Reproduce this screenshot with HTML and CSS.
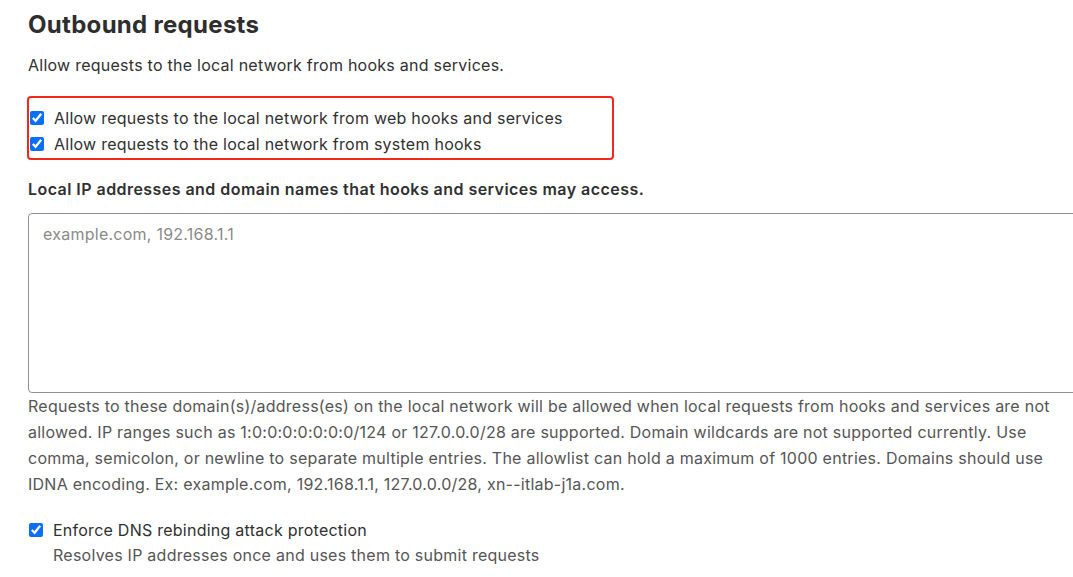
FILE: index.html
```html
<!DOCTYPE html>
<html lang="en">
<head>
  <meta charset="UTF-8">
  <title>Outbound requests</title>
  <link rel="stylesheet" href="styles.css">
</head>
<body>
  <section class="settings">
    <h2 class="settings-title">Outbound requests</h2>
    <p class="settings-desc">Allow requests to the local network from hooks and services.</p>

    <!-- Highlighted group of local network toggles -->
    <div class="highlight">
      <label class="check">
        <input type="checkbox" checked>
        <span>Allow requests to the local network from web hooks and services</span>
      </label>
      <label class="check">
        <input type="checkbox" checked>
        <span>Allow requests to the local network from system hooks</span>
      </label>
    </div>

    <label class="field-label" for="allowlist">Local IP addresses and domain names that hooks and services may access.</label>
    <textarea id="allowlist" class="field-input" placeholder="example.com, 192.168.1.1"></textarea>
    <p class="field-help">Requests to these domain(s)/address(es) on the local network will be allowed when local requests from hooks and services are not allowed. IP ranges such as 1:0:0:0:0:0:0:0/124 or 127.0.0.0/28 are supported. Domain wildcards are not supported currently. Use comma, semicolon, or newline to separate multiple entries. The allowlist can hold a maximum of 1000 entries. Domains should use IDNA encoding. Ex: example.com, 192.168.1.1, 127.0.0.0/28, xn--itlab-j1a.com.</p>

    <label class="check check-dns">
      <input type="checkbox" checked>
      <span>Enforce DNS rebinding attack protection</span>
    </label>
    <p class="check-help">Resolves IP addresses once and uses them to submit requests</p>
  </section>
</body>
</html>
```

FILE: styles.css
```css
html {
  overflow: hidden;
}
body {
  margin: 0;
  background-color: #fff;
  font-family: Inter, "Liberation Sans", Arial, sans-serif;
  font-size: 16px;
  letter-spacing: 0.25px;
  color: #303030;
}
.settings {
  padding: 8px 0 0 28px;
}
.settings-title {
  margin: 0;
  font-size: 24px;
  line-height: 34px;
  font-weight: 700;
  letter-spacing: 0.3px;
  color: #2e2e2e;
}
.settings-desc {
  margin: 11px 0 0;
  line-height: 24px;
}
/* Red outline around the two local network options */
.highlight {
  margin: 19px 0 0 -1px;
  width: 583px;
  padding: 7px 0 1px 0;
  border: 2px solid #f2281d;
  border-radius: 4px;
}
.check {
  display: flex;
  align-items: center;
  height: 26px;
}
.check input {
  width: 14px;
  height: 14px;
  margin: 0 10px 0 1px;
  accent-color: #0b6ef6;
}
.field-label {
  display: block;
  margin-top: 18px;
  font-weight: 600;
  letter-spacing: 0.45px;
  line-height: 22px;
}
.field-input {
  display: block;
  box-sizing: border-box;
  width: 1070px;
  height: 180px;
  margin-top: 13px;
  padding: 10px 14px;
  border: 1px solid #8f8f8f;
  border-radius: 4px;
  font-family: inherit;
  font-size: 16px;
  letter-spacing: 0.25px;
  resize: none;
}
.field-input::placeholder {
  color: #8a8a8a;
}
.field-help {
  margin: 0;
  width: 1030px;
  line-height: 26px;
  color: #555;
}
.check-dns {
  margin-top: 20px;
}
.check-help {
  margin: 0 0 0 25px;
  line-height: 24px;
  color: #555;
}
```
